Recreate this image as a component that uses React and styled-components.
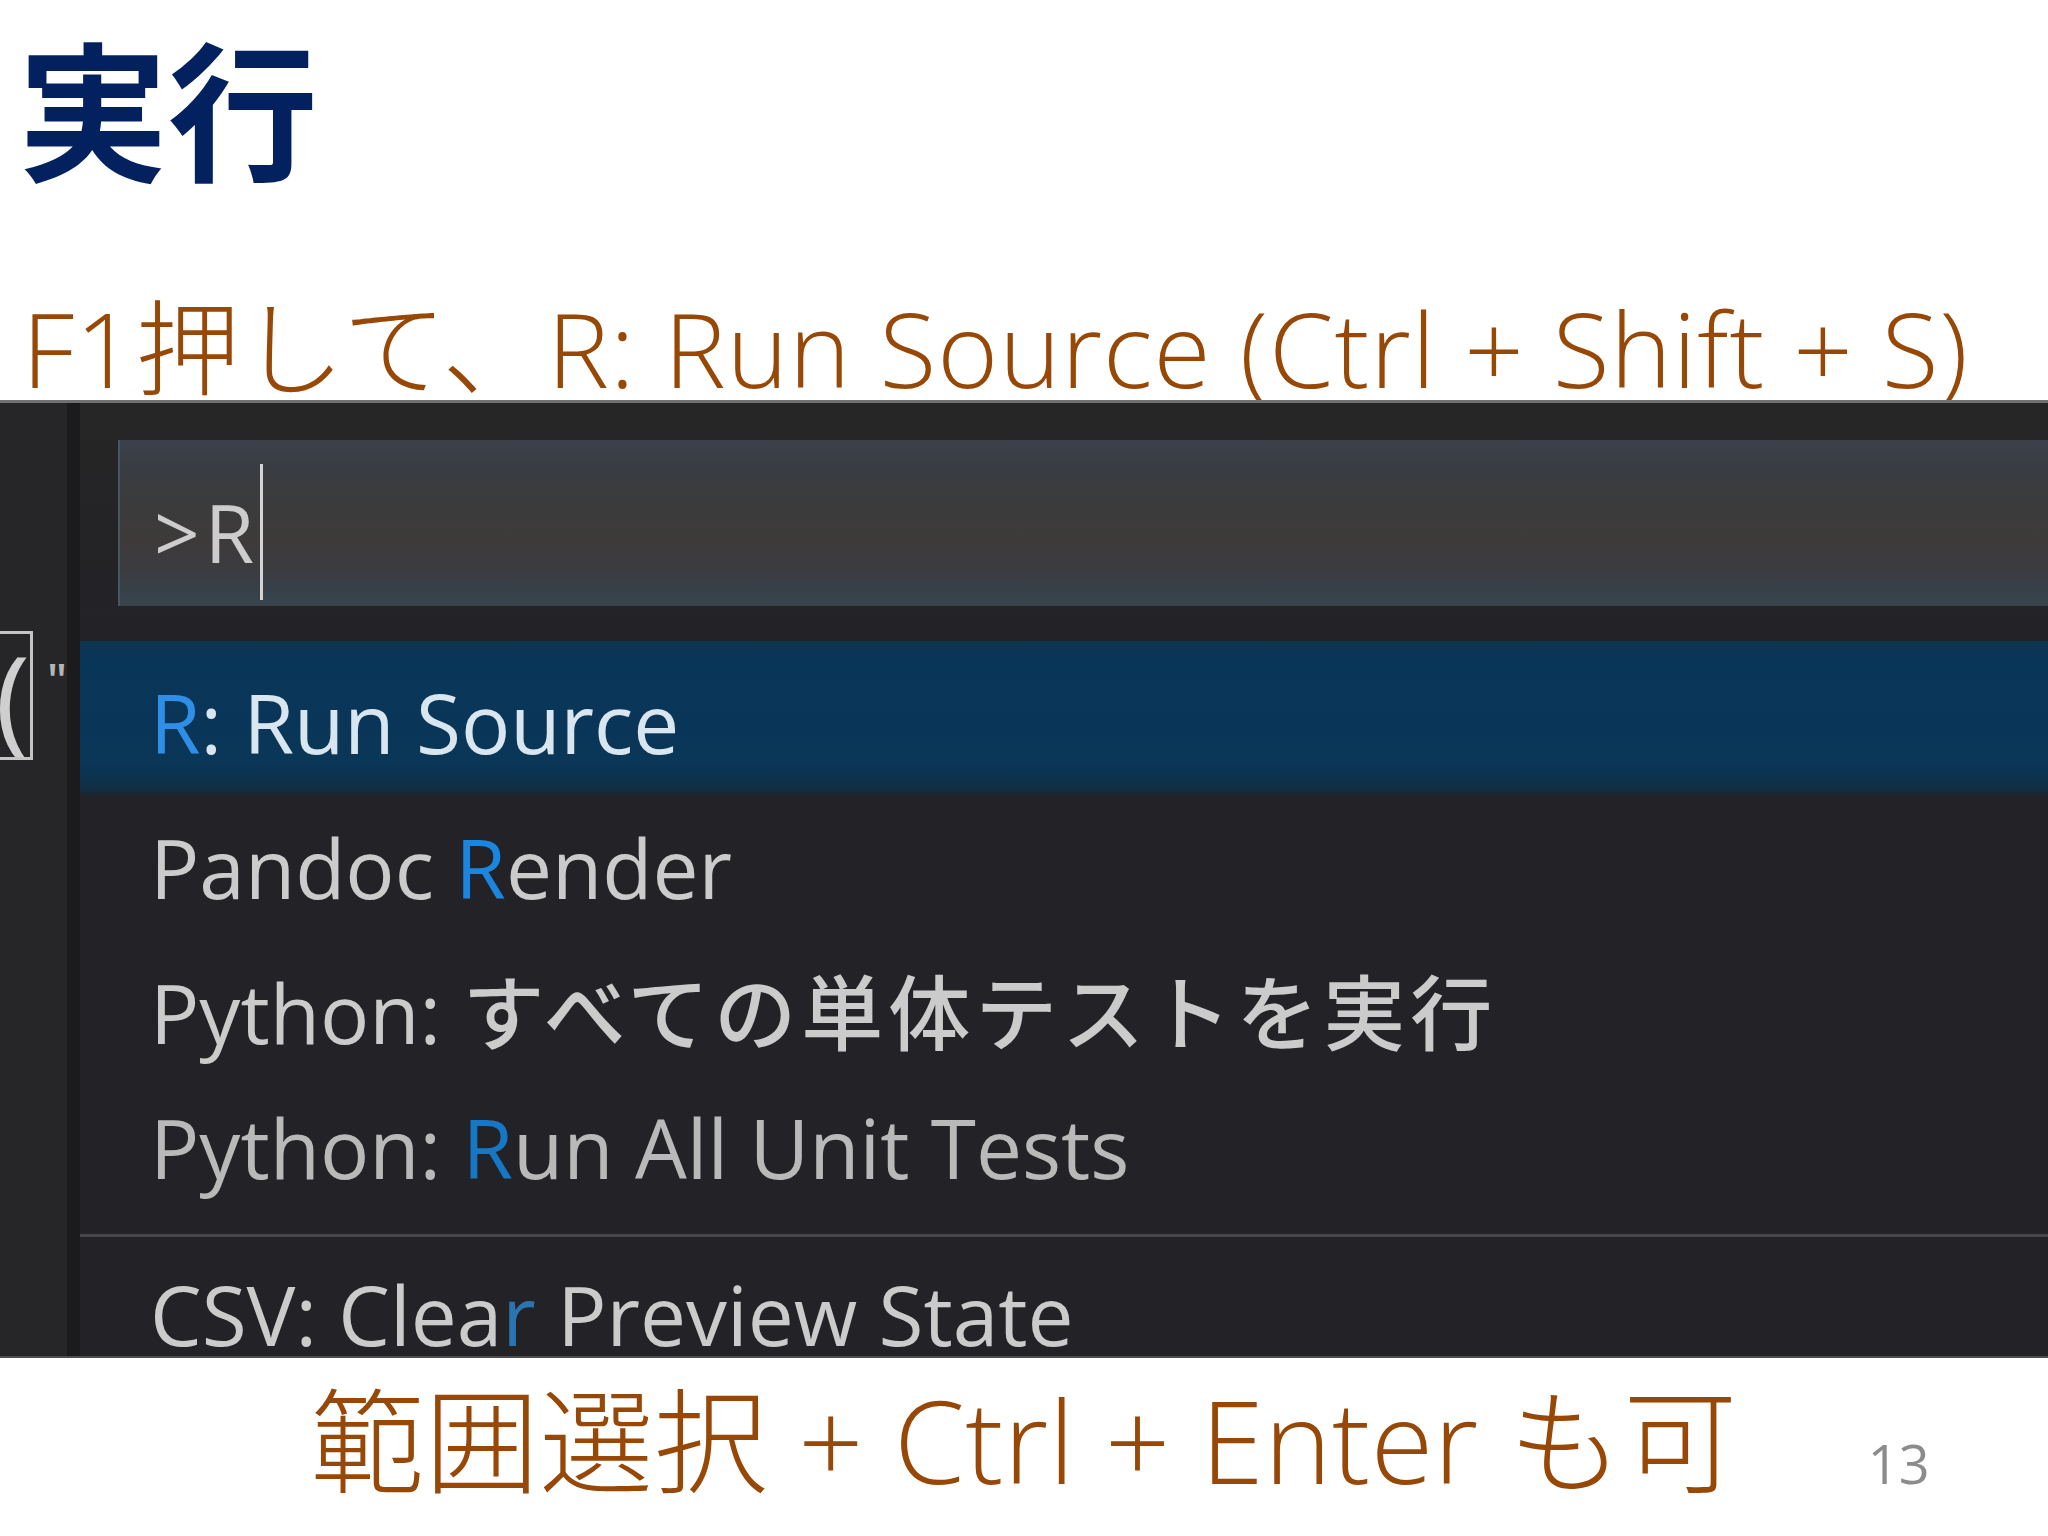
import React from "react";
import styled, { createGlobalStyle } from "styled-components";

const GlobalStyle = createGlobalStyle`
  html, body {
    margin: 0;
    padding: 0;
    background: #ffffff;
    width: 2048px;
    height: 1536px;
    overflow: hidden;
  }
  * { box-sizing: border-box; }
`;

const LATIN = `"Open Sans", "Noto Sans CJK JP", sans-serif`;
const BROWN = "#974806";

const Slide = styled.div`
  width: 2048px;
  height: 1536px;
  display: flex;
  flex-direction: column;
  background: #ffffff;
  font-family: ${LATIN};
`;

const Title = styled.h1`
  margin: 0;
  padding: 30px 0 0 18px;
  font-family: "Noto Sans CJK JP", sans-serif;
  font-weight: 700;
  font-size: 150px;
  line-height: 1;
  color: #04215f;
`;

const Subtitle = styled.p`
  margin: 115px 0 0;
  padding-left: 22px;
  font-family: ${LATIN};
  font-weight: 300;
  font-size: 104px;
  line-height: 105px;
  letter-spacing: 1px;
  color: ${BROWN};
  white-space: nowrap;
`;

const Panel = styled.div`
  display: flex;
  height: 958px;
  border-top: 3px solid #707070;
  border-bottom: 2px solid #4d4d4f;
  background: #232227;
  overflow: hidden;
`;

const Gutter = styled.div`
  flex: none;
  width: 67px;
  background: #262628;
  display: flex;
  align-items: flex-start;
  padding-top: 228px;
`;

const BracketBox = styled.div`
  width: 33px;
  height: 129px;
  border: 3px solid #c4c4c4;
  border-left: none;
  overflow: hidden;
  display: flex;
  align-items: center;
  justify-content: flex-end;
  font-family: "Open Sans", sans-serif;
  font-size: 118px;
  line-height: 1;
  color: #cfcfcf;
`;

const Quote = styled.span`
  margin: 24px 0 0 14px;
  font-family: "Open Sans", sans-serif;
  font-weight: 600;
  font-size: 46px;
  line-height: 1;
  color: #b5b5b5;
`;

const GutterDivider = styled.div`
  flex: none;
  width: 13px;
  background: #1b1b1d;
`;

const Palette = styled.div`
  flex: 1;
  min-width: 0;
  display: flex;
  flex-direction: column;
  background: #232227;
`;

const PaletteHeader = styled.div`
  padding: 37px 0 0 38px;
  background: linear-gradient(180deg, #262626 0%, #232327 100%);
`;

const InputBox = styled.div`
  height: 166px;
  display: flex;
  align-items: center;
  padding-left: 34px;
  border-left: 2px solid #4a5563;
  background: linear-gradient(
    180deg,
    #3b414b 0%,
    #393c41 18%,
    #3b3b3b 40%,
    #3e3a3a 62%,
    #3b3c40 78%,
    #37414a 92%,
    #3a444e 100%
  );
`;

const InputText = styled.span`
  margin-top: 18px;
  font-family: "Open Sans", sans-serif;
  font-weight: 500;
  font-size: 80px;
  line-height: 80px;
  color: #cdcdcd;
  letter-spacing: 5px;
`;

const Caret = styled.span`
  width: 3px;
  height: 136px;
  margin: 18px 0 0 1px;
  background: #d4d4d4;
`;

const List = styled.div`
  padding-top: 35px;
  display: flex;
  flex-direction: column;
  background: linear-gradient(180deg, #242327 0px, #232227 35px);
`;

const Row = styled.div`
  flex: none;
  height: ${(p) => p.$h}px;
  padding: ${(p) => p.$pt || 0}px 0 0 70px;
  font-family: ${LATIN};
  font-weight: 500;
  font-size: 82px;
  line-height: ${(p) => p.$lh}px;
  white-space: nowrap;
  overflow: hidden;
  color: ${(p) => (p.$selected ? "#d9e6ef" : p.$dim ? "#b9b9b9" : "#cbcbcb")};
  background: ${(p) =>
    p.$selected
      ? "linear-gradient(180deg, #0d3550 0%, #08365a 12%, #0a3657 80%, #0f3048 94%, #172632 100%)"
      : "transparent"};
`;

const Match = styled.span`
  color: ${(p) => p.$c || "#1a86e0"};
`;

const Jp = styled.span`
  letter-spacing: 5px;
`;

const Separator = styled.div`
  flex: none;
  height: 3px;
  margin-top: 25px;
  background: #48474c;
`;

const Footer = styled.div`
  display: grid;
  grid-template-columns: 1fr auto 1fr;
  align-items: baseline;
  margin-top: 14px;
`;

const FooterText = styled.p`
  grid-column: 2;
  margin: 0;
  font-family: ${LATIN};
  font-weight: 300;
  font-size: 114px;
  line-height: 1.2;
  letter-spacing: 0.5px;
  color: ${BROWN};
  white-space: nowrap;
`;

const PageNumber = styled.span`
  grid-column: 3;
  justify-self: start;
  margin-left: 130px;
  font-family: "Open Sans", sans-serif;
  font-size: 54px;
  color: #8c8c8c;
`;

export default function App() {
  return (
    <>
      <GlobalStyle />
      <Slide>
        <Title>実行</Title>
        <Subtitle>F1押して、R: Run Source (Ctrl + Shift + S)</Subtitle>
        <Panel>
          <Gutter>
            <BracketBox>(</BracketBox>
            <Quote>"</Quote>
          </Gutter>
          <GutterDivider />
          <Palette>
            <PaletteHeader>
              <InputBox>
                <InputText>&gt;R</InputText>
                <Caret />
              </InputBox>
            </PaletteHeader>
            <List>
              <Row $selected $h={154} $lh={142} $pt={10}>
                <Match $c="#2f8fe6">R</Match>: Run Source
              </Row>
              <Row $h={145} $lh={145}>
                Pandoc <Match>R</Match>ender
              </Row>
              <Row $h={145} $lh={145}>
                Python: <Jp>すべての単体テストを実行</Jp>
              </Row>
              <Row $dim $h={124} $lh={124}>
                Python: <Match $c="#1677c4">R</Match>un All Unit Tests
              </Row>
              <Separator />
              <Row $h={154} $lh={154}>
                CSV: Clea<Match $c="#2a74b0">r</Match> Preview State
              </Row>
            </List>
          </Palette>
        </Panel>
        <Footer>
          <FooterText>範囲選択 + Ctrl + Enter も可</FooterText>
          <PageNumber>13</PageNumber>
        </Footer>
      </Slide>
    </>
  );
}
